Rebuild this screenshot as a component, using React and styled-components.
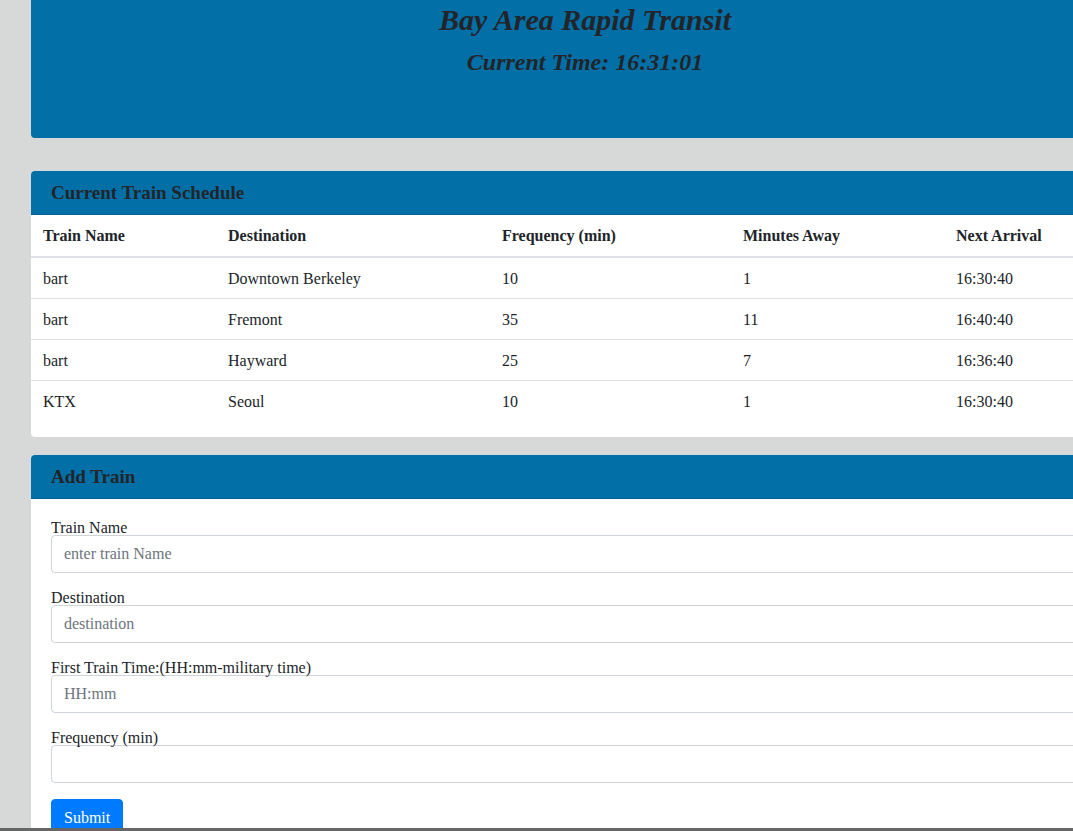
import React from "react";
import styled, { createGlobalStyle } from "styled-components";

const Global = createGlobalStyle`
  html, body { margin: 0; padding: 0; }
  body {
    background: #d7d8d8;
    font-family: "Liberation Serif", "Times New Roman", serif;
    font-size: 16px;
    color: #212529;
    overflow: hidden;
  }
`;

const Page = styled.div`
  padding-left: 31px;
  width: 1108px;
`;

const Jumbo = styled.header`
  background: #036fa7;
  height: 138px;
  box-sizing: border-box;
  padding-top: 2px;
  border-radius: 0 0 4px 4px;
  text-align: center;
  margin-bottom: 33px;
`;

const Title = styled.h1`
  margin: 0 0 10px;
  font-size: 30px;
  line-height: 36px;
  font-style: italic;
  font-weight: bold;
  color: #212529;
`;

const Clock = styled.h3`
  margin: 0;
  font-size: 24px;
  line-height: 28.8px;
  font-style: italic;
  font-weight: bold;
  color: #212529;
`;

const Card = styled.section`
  background: #fff;
  border-radius: 4px;
  overflow: hidden;
  margin-bottom: 18px;
`;

const CardHeader = styled.div`
  background: #036fa7;
  padding: 12px 20px;
  border-bottom: 1px solid rgba(0, 0, 0, 0.125);
  font-size: 19px;
  line-height: 19px;
  font-weight: bold;
  color: #212529;
`;

const Table = styled.table`
  width: 100%;
  table-layout: fixed;
  border-collapse: collapse;
  margin-bottom: 16px;
`;

const Th = styled.th`
  text-align: left;
  padding: 13px 12px 12px;
  line-height: 16px;
  font-weight: bold;
  border-bottom: 2px solid #dee2e6;
`;

const Td = styled.td`
  padding: 13px 12px 11px;
  line-height: 16px;
  border-top: 1px solid #dee2e6;
`;

const Form = styled.form`
  padding: 20px;
`;

const Group = styled.div`
  margin-bottom: 16px;
`;

const Label = styled.label`
  display: block;
  padding-top: 2px;
  line-height: 14px;
`;

const Input = styled.input`
  display: block;
  width: 100%;
  box-sizing: border-box;
  height: 38px;
  padding: 6px 12px;
  font-family: inherit;
  font-size: 16px;
  line-height: 24px;
  color: #495057;
  border: 1px solid #ced4da;
  border-radius: 4px;
  background: #fff;
  &::placeholder { color: #6c757d; opacity: 1; }
`;

const Button = styled.button`
  font-family: inherit;
  font-size: 16px;
  line-height: 24px;
  padding: 6px 12px;
  color: #fff;
  background: #007bff;
  border: 1px solid #007bff;
  border-radius: 4px;
`;

const BottomEdge = styled.div`
  position: fixed;
  left: 0;
  right: 0;
  bottom: 0;
  height: 3px;
  background: #666;
`;

const rows = [
  ["bart", "Downtown Berkeley", "10", "1", "16:30:40"],
  ["bart", "Fremont", "35", "11", "16:40:40"],
  ["bart", "Hayward", "25", "7", "16:36:40"],
  ["KTX", "Seoul", "10", "1", "16:30:40"],
];

const cols = [185, 274, 241, 213, 195];

export default function App() {
  return (
    <>
      <Global />
      <Page>
        <Jumbo>
          <Title>Bay Area Rapid Transit</Title>
          <Clock>Current Time: 16:31:01</Clock>
        </Jumbo>
        <Card>
          <CardHeader>Current Train Schedule</CardHeader>
          <Table>
            <colgroup>
              {cols.map((w, i) => (
                <col key={i} style={{ width: w }} />
              ))}
            </colgroup>
            <thead>
              <tr>
                <Th>Train Name</Th>
                <Th>Destination</Th>
                <Th>Frequency (min)</Th>
                <Th>Minutes Away</Th>
                <Th>Next Arrival</Th>
              </tr>
            </thead>
            <tbody>
              {rows.map((r, i) => (
                <tr key={i}>
                  {r.map((c, j) => (
                    <Td key={j}>{c}</Td>
                  ))}
                </tr>
              ))}
            </tbody>
          </Table>
        </Card>
        <Card>
          <CardHeader>Add Train</CardHeader>
          <Form onSubmit={(e) => e.preventDefault()}>
            <Group>
              <Label>Train Name</Label>
              <Input placeholder="enter train Name" />
            </Group>
            <Group>
              <Label>Destination</Label>
              <Input placeholder="destination" />
            </Group>
            <Group>
              <Label>First Train Time:(HH:mm-military time)</Label>
              <Input placeholder="HH:mm" />
            </Group>
            <Group>
              <Label>Frequency (min)</Label>
              <Input />
            </Group>
            <Button type="submit">Submit</Button>
          </Form>
        </Card>
      </Page>
      <BottomEdge />
    </>
  );
}
